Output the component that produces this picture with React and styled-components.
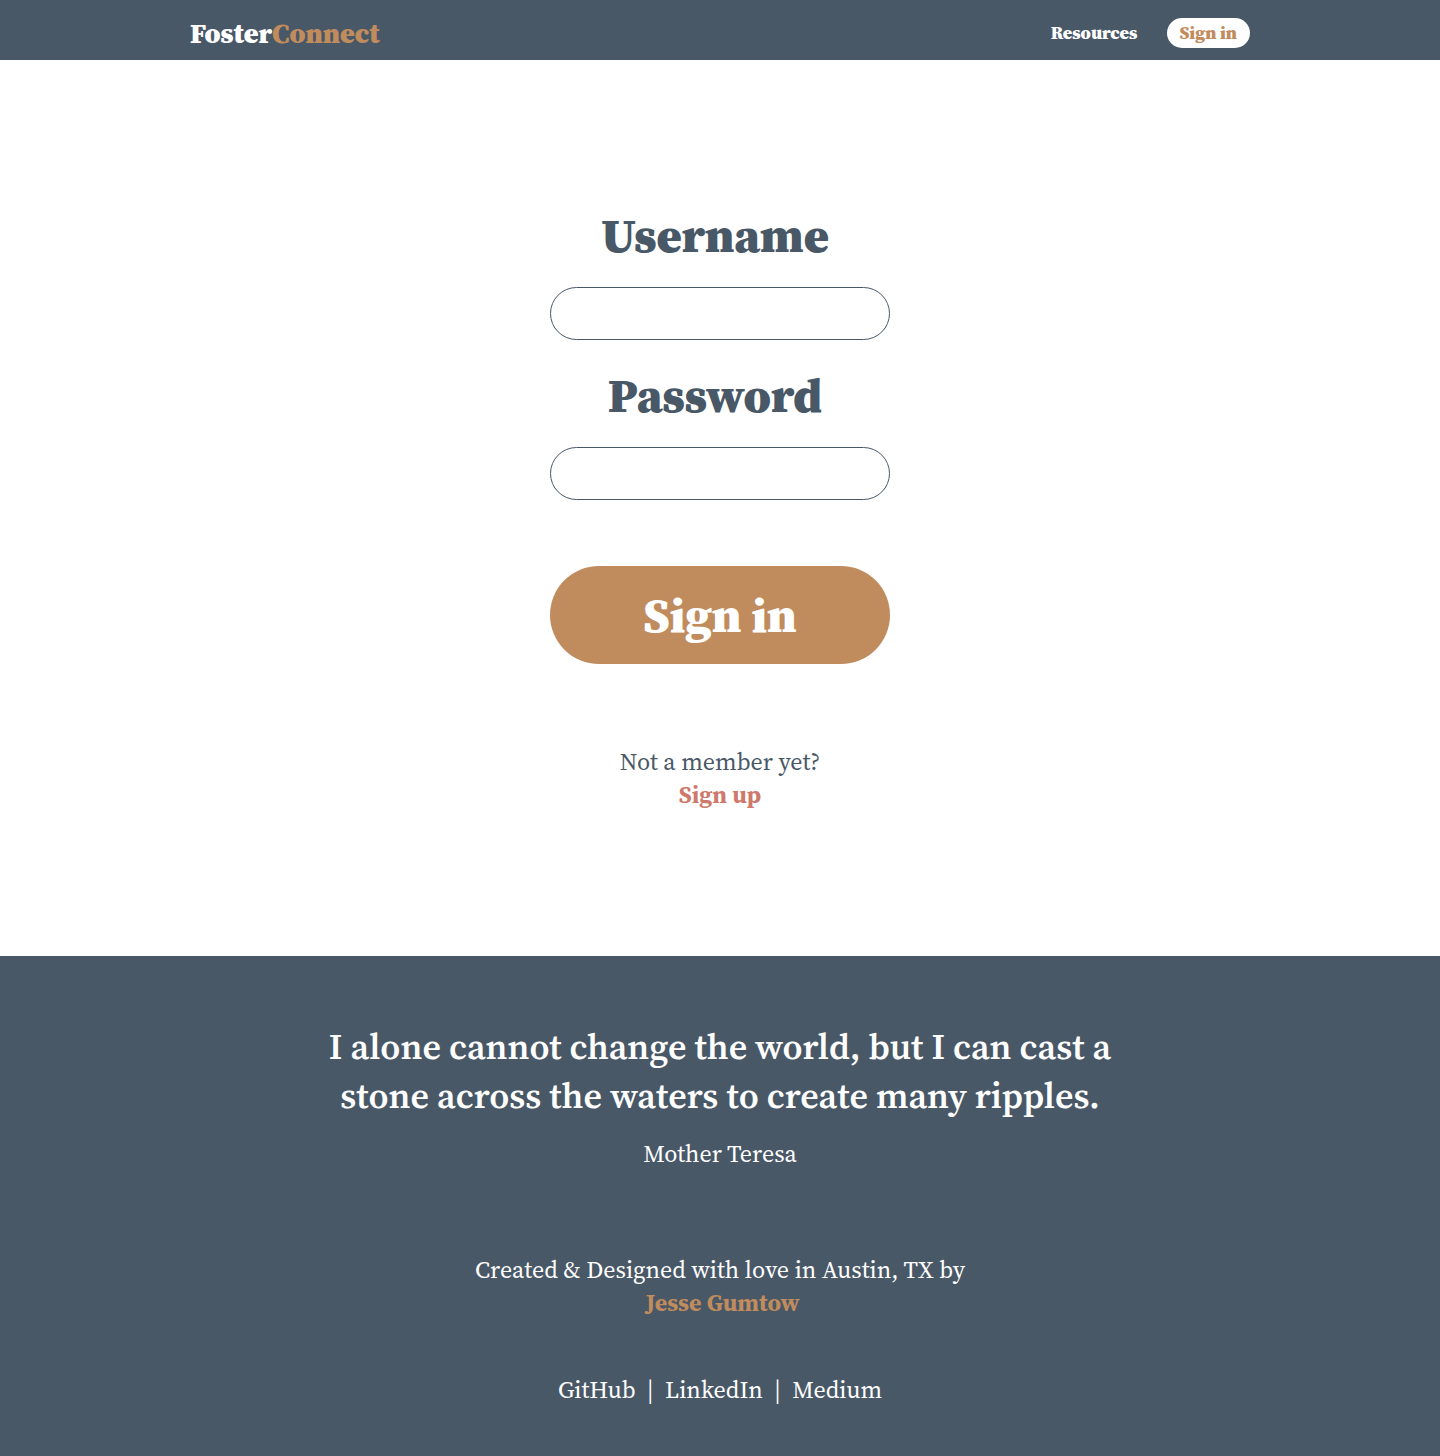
import React from 'react';
import styled, { createGlobalStyle } from 'styled-components';

const slate = '#495867';
const copper = '#c18c5d';
const coral = '#ce796b';

const GlobalStyle = createGlobalStyle`
  *, *::before, *::after { box-sizing: border-box; }
  body {
    margin: 0;
    background: #fff;
    color: ${slate};
    font-family: 'Source Serif Pro', 'Source Serif 4', 'Liberation Serif', serif;
    font-size: 24px;
    line-height: 33px;
  }
  a { color: inherit; text-decoration: none; }
`;

const Header = styled.header`
  background: ${slate};
  padding: 0 24px;
`;

const Nav = styled.nav`
  display: flex;
  align-items: center;
  justify-content: space-between;
  max-width: 1060px;
  height: 60px;
  margin: 0 auto;
  padding-top: 6px;
`;

const Brand = styled.a`
  && { color: #fff; }
  font-size: 28px;
  font-weight: 900;
`;

const Accent = styled.span`
  color: ${copper};
`;

const NavLinks = styled.div`
  display: flex;
  align-items: center;
  gap: 30px;
  font-size: 18px;
  font-weight: 900;
  line-height: 30px;
`;

const NavLink = styled.a`
  && { color: ${({ $pill }) => ($pill ? copper : '#fff')}; }
  background: ${({ $pill }) => ($pill ? '#fff' : 'transparent')};
  padding: ${({ $pill }) => ($pill ? '0 13px 0 12px' : '0')};
  border-radius: 15px;
`;

const Main = styled.main`
  display: flex;
  flex-direction: column;
  align-items: center;
  padding: 144px 24px 145px;
`;

const Form = styled.form`
  display: flex;
  flex-direction: column;
  width: 100%;
  max-width: 340px;
`;

const Field = styled.div`
  display: flex;
  flex-direction: column;
  gap: 20px;
  margin-bottom: 24px;
`;

const Label = styled.label`
  padding-right: 10px;
  font-size: 48px;
  font-weight: 900;
  line-height: 63px;
  text-align: center;
`;

const Input = styled.input`
  width: 100%;
  height: 53px;
  padding: 0 24px;
  border: 1px solid ${slate};
  border-radius: 27px;
  background: #fff;
  color: ${slate};
  font: inherit;
`;

const Submit = styled.button`
  height: 98px;
  margin-top: 42px;
  padding: 0;
  border: 0;
  border-radius: 49px;
  background: ${copper};
  color: #fff;
  font-family: inherit;
  font-size: 48px;
  font-weight: 900;
  cursor: pointer;
`;

const Text = styled.p`
  margin: 0;
`;

const Prompt = styled.div`
  margin-top: 81px;
  text-align: center;
`;

const StrongLink = styled.a`
  && { color: ${({ $tone }) => $tone}; }
  font-weight: 700;
`;

const Footer = styled.footer`
  padding: 66px 24px 50px;
  background: ${slate};
  color: #fff;
  text-align: center;
`;

const Quote = styled.blockquote`
  max-width: 820px;
  margin: 0 auto 17px;
  font-size: 36px;
  font-weight: 600;
  line-height: 49px;
`;

const Credit = styled.div`
  margin: 83px 0 54px;
`;

export default function App() {
  return (
    <>
      <GlobalStyle />
      <Header>
        <Nav>
          <Brand href="#home">Foster<Accent>Connect</Accent></Brand>
          <NavLinks>
            <NavLink href="#resources">Resources</NavLink>
            <NavLink href="#sign-in" $pill>Sign in</NavLink>
          </NavLinks>
        </Nav>
      </Header>
      <Main>
        <Form id="sign-in" onSubmit={(event) => event.preventDefault()}>
          <Field>
            <Label htmlFor="username">Username</Label>
            <Input id="username" name="username" type="text" autoComplete="username" />
          </Field>
          <Field>
            <Label htmlFor="password">Password</Label>
            <Input id="password" name="password" type="password" autoComplete="current-password" />
          </Field>
          <Submit type="submit">Sign in</Submit>
        </Form>
        <Prompt>
          <Text>Not a member yet?</Text>
          <StrongLink href="#sign-up" $tone={coral}>Sign up</StrongLink>
        </Prompt>
      </Main>
      <Footer>
        <Quote>I alone cannot change the world, but I can cast a stone across the waters to create many ripples.</Quote>
        <Text>Mother Teresa</Text>
        <Credit>
          <Text>Created &amp; Designed with love in Austin, TX by</Text>
          &nbsp;<StrongLink href="#author" $tone={copper}>Jesse Gumtow</StrongLink>
        </Credit>
        <Text>
          <a href="#github">GitHub</a>
          &nbsp; | &nbsp;
          <a href="#linkedin">LinkedIn</a>
          &nbsp; | &nbsp;
          <a href="#medium">Medium</a>
        </Text>
      </Footer>
    </>
  );
}
